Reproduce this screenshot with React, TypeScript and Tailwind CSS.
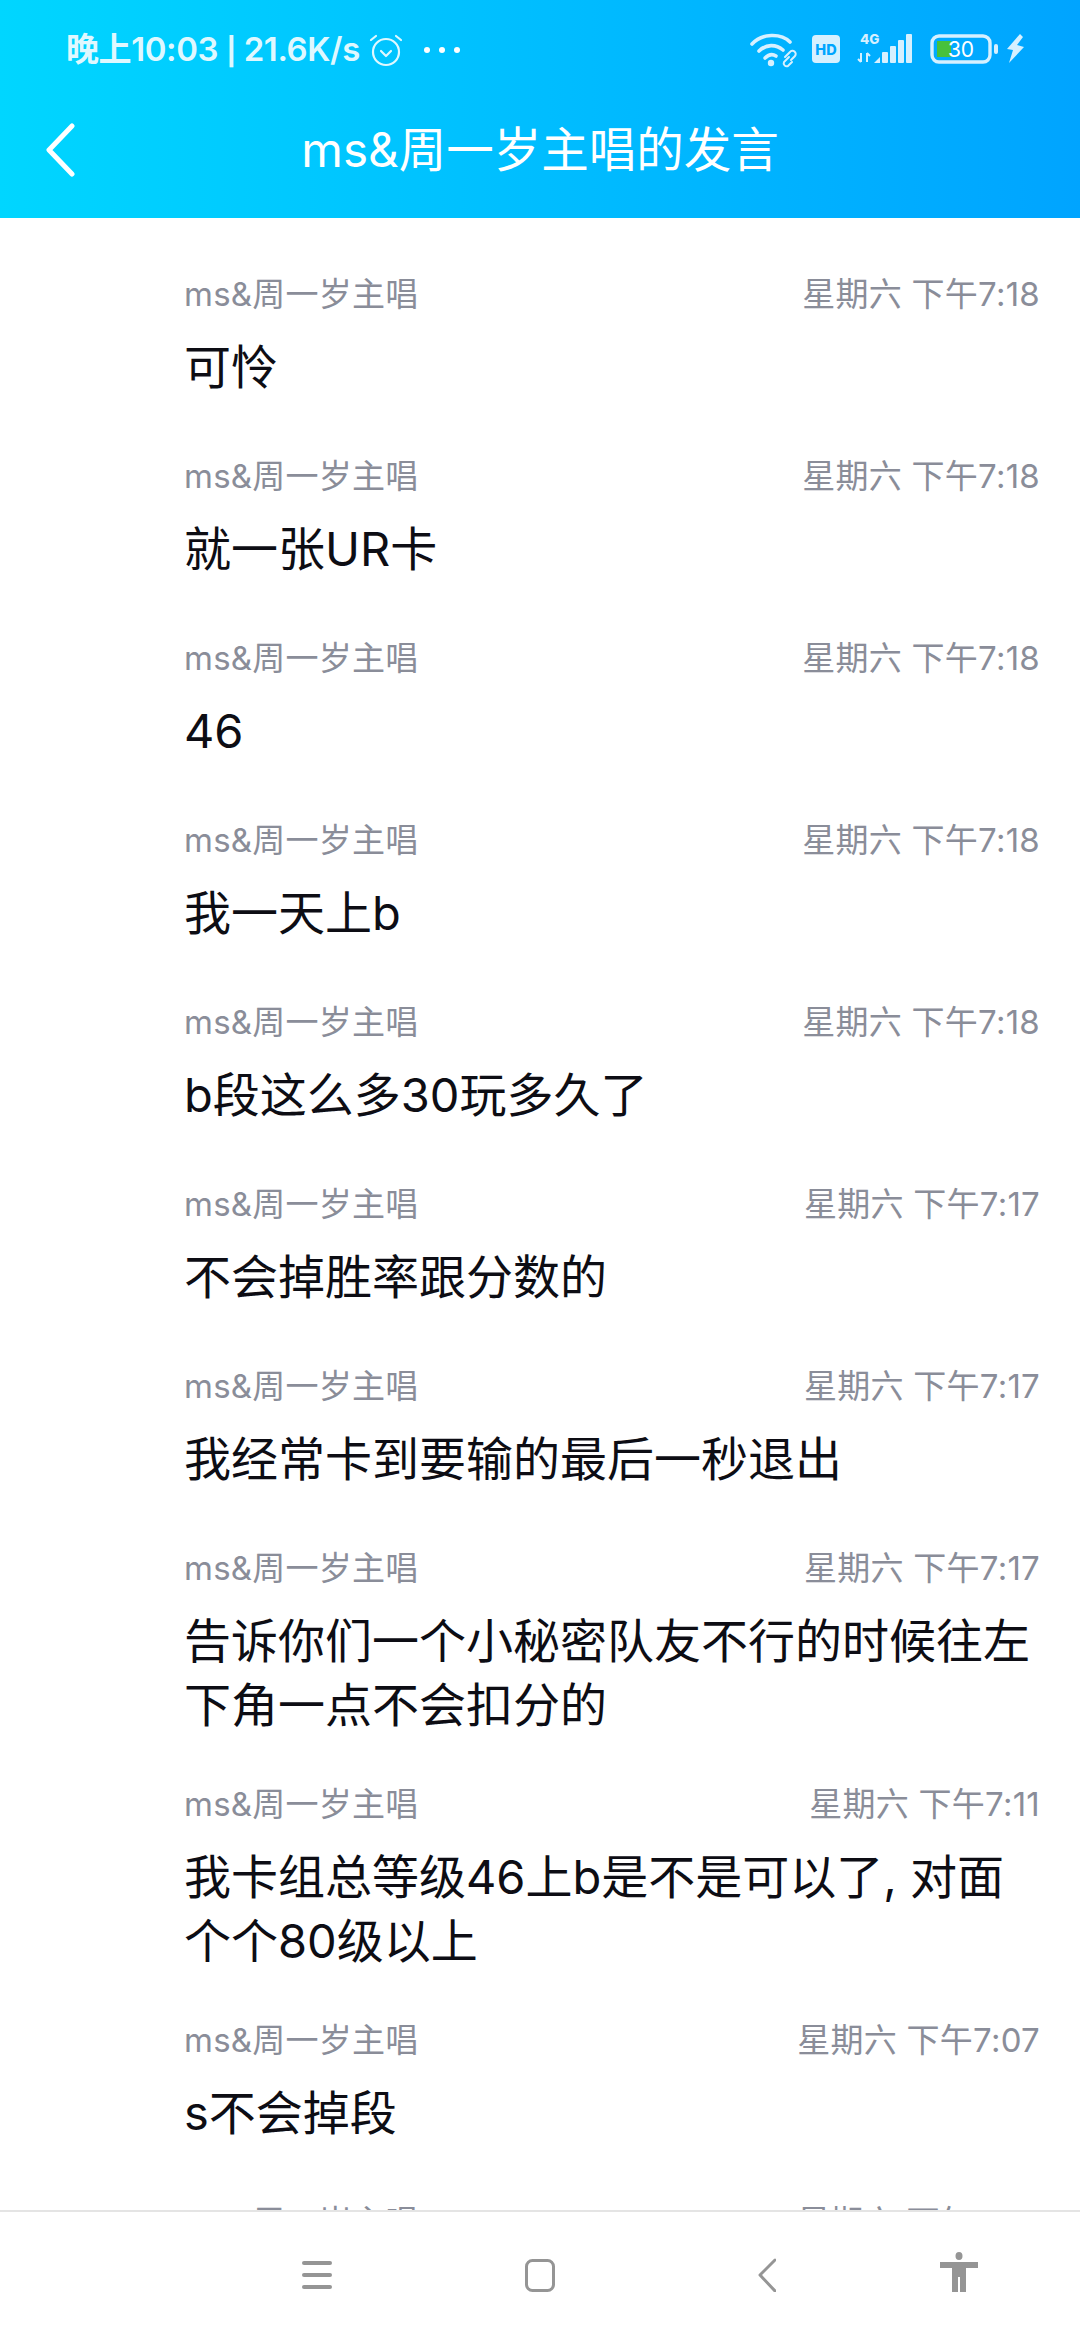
import React from "react";

type Msg = { time: string; lines: string[] };

const messages: Msg[] = [
  { time: "星期六 下午7:18", lines: ["可怜"] },
  { time: "星期六 下午7:18", lines: ["就一张UR卡"] },
  { time: "星期六 下午7:18", lines: ["46"] },
  { time: "星期六 下午7:18", lines: ["我一天上b"] },
  { time: "星期六 下午7:18", lines: ["b段这么多30玩多久了"] },
  { time: "星期六 下午7:17", lines: ["不会掉胜率跟分数的"] },
  { time: "星期六 下午7:17", lines: ["我经常卡到要输的最后一秒退出"] },
  { time: "星期六 下午7:17", lines: ["告诉你们一个小秘密队友不行的时候往左", "下角一点不会扣分的"] },
  { time: "星期六 下午7:11", lines: ["我卡组总等级46上b是不是可以了, 对面", "个个80级以上"] },
  { time: "星期六 下午7:07", lines: ["s不会掉段"] },
  { time: "星期六 下午7:07", lines: ["上b"] },
];

const font = "font-['Inter','Noto_Sans_CJK_SC',sans-serif]";

const StatusIcons = () => (
  <svg width="280" height="40" viewBox="0 0 280 40" fill="none" className="text-[#d6f0ff]">
    {/* wifi */}
    <g stroke="currentColor" strokeWidth="3.6" strokeLinecap="round">
      <path d="M5 14 C15 3 34 3 43 12" />
      <path d="M12 21 C19 14 29 14 36 20" />
      <path d="M18 28 C22 24 26 24 29 26" />
    </g>
    <circle cx="24" cy="33" r="3.2" fill="currentColor" />
    <g stroke="currentColor" strokeWidth="2" strokeLinecap="round" fill="none">
      <path d="M38 27 l5-5 a3 3 0 0 1 5 4 l-4 4" />
      <path d="M42 27 l-5 5 a3 3 0 0 0 4 4 l4-4" />
    </g>
    {/* HD */}
    <rect x="65" y="5" width="28" height="28" rx="4" fill="currentColor" />
    <text x="79" y="24.5" textAnchor="middle" fontSize="14.5" fontWeight="800" fill="#00a5ff" fontFamily="Inter">HD</text>
    {/* 4G + arrows */}
    <text x="113" y="14" fontSize="13.5" fontWeight="800" fill="currentColor" fontFamily="Inter">4G</text>
    <path d="M114 23v9M111 29l3 3M120 32V23M120 23l3 3" stroke="currentColor" strokeWidth="2" />
    {/* signal */}
    <path d="M127 33 L133 27 V33Z" fill="currentColor" />
    <rect x="135" y="22" width="6" height="11" rx="1" fill="currentColor" />
    <rect x="143" y="16" width="6" height="17" rx="1" fill="currentColor" />
    <rect x="151" y="10" width="6" height="23" rx="1" fill="currentColor" />
    <rect x="159" y="4" width="6" height="29" rx="1" fill="currentColor" />
    {/* battery */}
    <rect x="185" y="6" width="58" height="26" rx="7" stroke="currentColor" strokeWidth="3.4" />
    <rect x="190" y="11" width="14" height="16" fill="#47c13d" />
    <text x="214" y="27" textAnchor="middle" fontSize="21" fill="#fff" fontFamily="Inter">30</text>
    <rect x="247" y="14" width="4" height="10" rx="2" fill="currentColor" />
    <path d="M273 4 L260 19 L266 20 L262 33 L277 17 L270 15 L276 7Z" fill="currentColor" />
  </svg>
);

const App = () => {
  return (
    <div className={`w-[1080px] h-[2340px] flex flex-col bg-white overflow-hidden ${font}`}>
      {/* Header */}
      <header className="h-[218px] shrink-0 bg-gradient-to-r from-[#00d6ff] to-[#00a4ff] text-white">
        <div className="h-[100px] flex items-center justify-between pl-[66px] pr-[53px]">
          <div className="flex items-center text-[#dff8ff]">
            <span className="text-[33px] font-semibold tracking-[-0.4px]">
              晚上10:03 <span className="text-[27px] font-bold">|</span> 21.6K/s
            </span>
            <svg width="36" height="36" viewBox="0 0 36 36" fill="none" stroke="currentColor" strokeWidth="2.2" strokeLinecap="round" strokeLinejoin="round" className="ml-[8px]">
              <circle cx="18" cy="20" r="13" />
              <path d="M13 19l5 5 5-5M3 8l5-4M33 8l-5-4" />
            </svg>
            <div className="flex items-center gap-[9px] ml-[20px]">
              <span className="w-[6px] h-[6px] rounded-full bg-white" />
              <span className="w-[6px] h-[6px] rounded-full bg-white" />
              <span className="w-[6px] h-[6px] rounded-full bg-white" />
            </div>
          </div>
          <StatusIcons />
        </div>
        <div className="h-[100px] grid grid-cols-[1fr_auto_1fr] items-center">
          <svg width="34" height="54" viewBox="0 0 34 54" fill="none" stroke="#ffffff" strokeWidth="5" strokeLinecap="round" strokeLinejoin="round" className="ml-[44px]">
            <path d="M28 3 L5 27 L28 51" />
          </svg>
          <h1 className="text-[47.5px] font-normal leading-none">ms&amp;周一岁主唱的发言</h1>
        </div>
      </header>

      {/* Message list */}
      <main className="flex-1 min-h-0 overflow-hidden pl-[184px] pr-[40px] pt-[51px]">
        {messages.map((m, i) => (
          <div key={i} className="pb-[42px]">
            <div className="flex justify-between items-center h-[52px] text-[33px] tracking-[0.25px] text-[#8a8d99]">
              <span>ms&amp;周一岁主唱</span>
              <span>{m.time}</span>
            </div>
            <div className="mt-[14px] min-h-[74px]">
              {m.lines.map((l) => (
                <p key={l} className="text-[47px] leading-[64px] text-[#0d0d14] whitespace-nowrap">
                  {l}
                </p>
              ))}
            </div>
          </div>
        ))}
      </main>

      {/* Nav bar */}
      <nav className="h-[130px] shrink-0 bg-white border-t-2 border-[#e4e4e4] flex items-start pt-[40px] pl-[302px]">
        <svg width="30" height="40" viewBox="0 0 30 40" fill="#959595">
          <rect x="0" y="9" width="30" height="4" rx="2" />
          <rect x="0" y="21" width="30" height="4" rx="2" />
          <rect x="0" y="33" width="30" height="4" rx="2" />
        </svg>
        <svg width="30" height="40" viewBox="0 0 30 40" fill="none" stroke="#959595" strokeWidth="3" className="ml-[193px]">
          <rect x="1.5" y="8.5" width="27" height="30" rx="6" />
        </svg>
        <svg width="18" height="40" viewBox="0 0 18 40" fill="none" stroke="#959595" strokeWidth="3" strokeLinecap="round" strokeLinejoin="round" className="ml-[203px]">
          <path d="M17 8 L2 23 L17 39" />
        </svg>
        <svg width="38" height="40" viewBox="0 0 38 40" fill="#959595" className="ml-[164px]">
          <ellipse cx="19" cy="4" rx="3.5" ry="4" />
          <path d="M0 10 H38 V16 H26 V40 H20 V25 H18 V40 H12 V16 H0Z" />
        </svg>
      </nav>
    </div>
  );
};

export default App;
